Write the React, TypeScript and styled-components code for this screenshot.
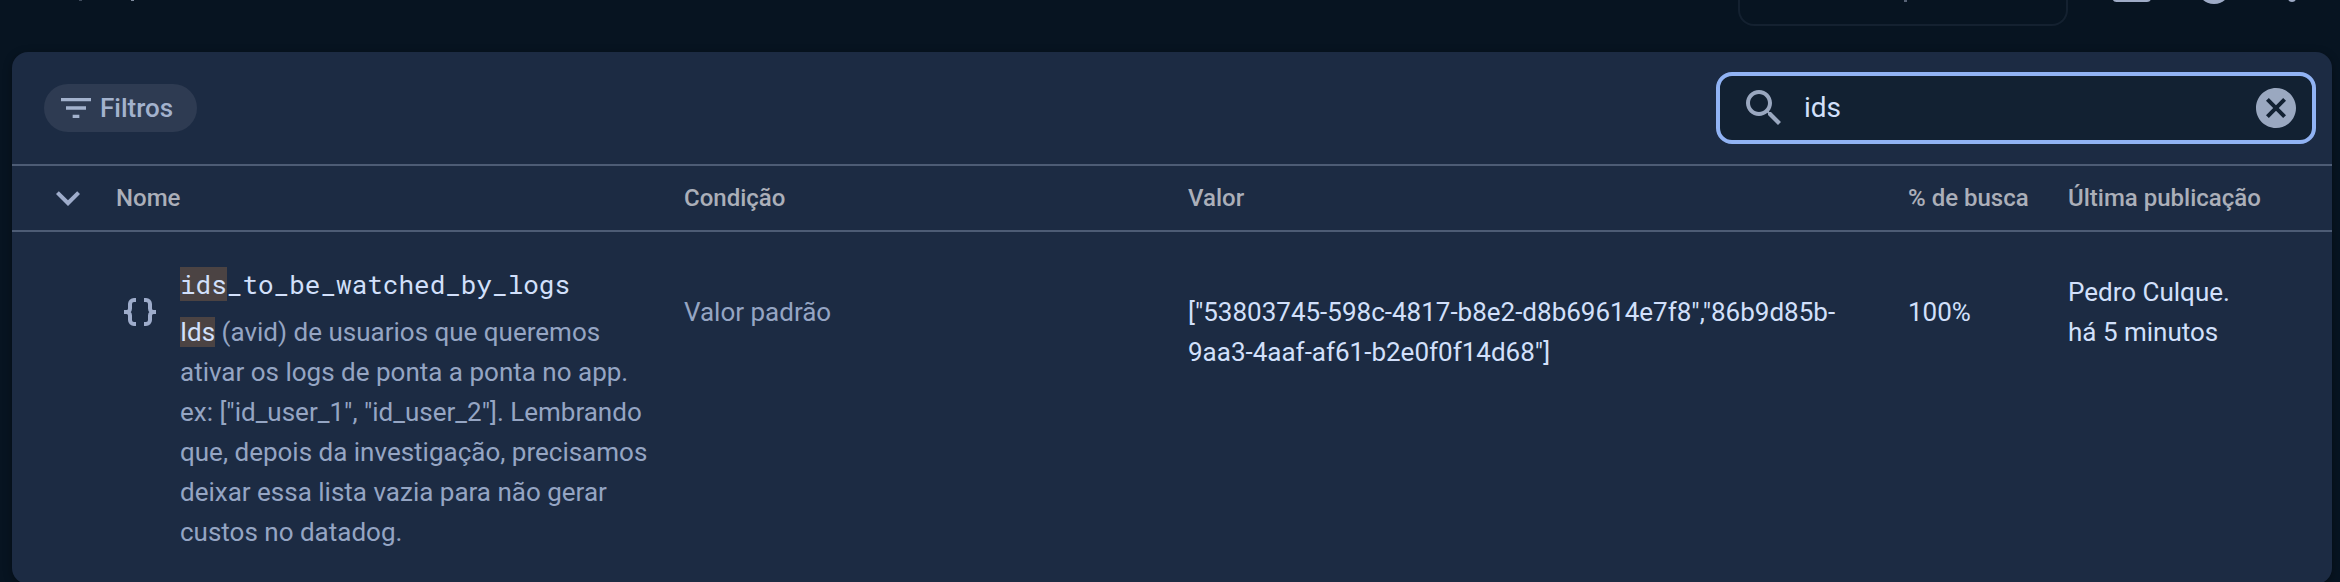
import React from "react";
import styled, { createGlobalStyle } from "styled-components";

const GlobalStyle = createGlobalStyle`
  * { box-sizing: border-box; }
  body { margin: 0; background: #071421; font-family: Roboto, "Liberation Sans", sans-serif; }
`;

const Page = styled.div`
  height: 582px;
  padding: 0 8px 0 12px;
  overflow: hidden;
  background: #071421;
`;

const TopBar = styled.header`
  height: 52px;
  display: flex;
  align-items: flex-start;
  padding-right: 28px;
`;

const TitleTail = styled.svg`
  display: block;
  width: 140px;
  height: 2px;
  margin-right: auto;
`;

const Selector = styled.div`
  width: 330px;
  height: 26px;
  margin-right: 44px;
  padding-left: 164px;
  border: 2px solid #142130;
  border-top: 0;
  border-radius: 0 0 16px 16px;
`;

const SelectorTail = styled.div`
  width: 3px;
  height: 2px;
  background: #566275;
`;

const TopIcons = styled.svg`
  display: block;
  width: 192px;
  height: 6px;
`;

const Card = styled.main`
  height: 532px;
  border-radius: 16px;
  background: #1c2b43;
  box-shadow: 0 2px 8px rgba(0, 0, 0, 0.35);
`;

const Toolbar = styled.div`
  height: 114px;
  padding: 0 16px 0 32px;
  border-bottom: 2px solid #4d5c75;
  display: flex;
  align-items: center;
  justify-content: space-between;
`;

const FilterChip = styled.button`
  height: 48px;
  width: 153px;
  padding: 0 0 0 12px;
  border: 0;
  border-radius: 24px;
  background: #2e3b52;
  color: #a3b2cd;
  display: flex;
  align-items: center;
  gap: 4px;
  font: 500 26px/40px Roboto, sans-serif;
`;

const SearchField = styled.div`
  width: 600px;
  height: 72px;
  padding: 0 12px 0 20px;
  border: 4px solid #91b3f4;
  border-radius: 16px;
  background: #122132;
  color: #9aa8c0;
  display: flex;
  align-items: center;
`;

const SearchInput = styled.input`
  flex: 1;
  min-width: 0;
  margin: 0 0 0 16px;
  padding: 0;
  border: 0;
  outline: 0;
  background: transparent;
  color: #d2e0fb;
  font: 400 28px/40px Roboto, sans-serif;
`;

const Icon = styled.svg<{ $size: number }>`
  display: block;
  flex: none;
  width: ${(p) => p.$size}px;
  height: ${(p) => p.$size}px;
  fill: currentColor;
`;

const BracesIcon = styled.svg`
  display: block;
  width: 32px;
  height: 28px;
  fill: none;
  stroke: currentColor;
  stroke-width: 4;
`;

const columns = "104px 568px 504px 720px 160px 1fr";

const HeadRow = styled.div`
  height: 66px;
  display: grid;
  grid-template-columns: ${columns};
  align-items: center;
  border-bottom: 2px solid #4d5c75;
  color: #abafb9;
  font-size: 24px;
  font-weight: 500;
  line-height: 32px;
`;

const Toggle = styled.div`
  padding-left: 32px;
  color: #9eaccb;
`;

const Row = styled.div`
  display: grid;
  grid-template-columns: 168px 504px 504px 720px 160px 1fr;
  align-items: start;
  color: #d2e0fb;
  font-size: 26px;
  line-height: 40px;
`;

const TypeIcon = styled.div`
  padding: 66px 0 0 112px;
  color: #9eaccb;
`;

const NameCell = styled.div`
  padding: 32px 24px 0 0;
`;

const Name = styled.div`
  height: 48px;
  font: 400 26px/40px "Roboto Mono", "DejaVu Sans Mono", monospace;
`;

const Description = styled.div`
  color: #95a5c3;
  white-space: nowrap;
`;

const Mark = styled.mark`
  background: #4b4343;
  color: #d2e0fb;
`;

const Cell = styled.div<{ $top: number; $muted?: boolean }>`
  padding-top: ${(p) => p.$top}px;
  color: ${(p) => (p.$muted ? "#95a5c3" : "#d2e0fb")};
  white-space: nowrap;
`;

export default function App() {
  return (
    <Page>
      <GlobalStyle />
      <TopBar>
        <TitleTail viewBox="0 0 140 2">
          <path d="M67 0h3v1h-3z" fill="#3f4b5c" />
          <path d="M119 0h3v1h-3z" fill="#808c9f" />
        </TitleTail>
        <Selector>
          <SelectorTail />
        </Selector>
        <TopIcons viewBox="0 0 192 6" fill="#9eabc6">
          <rect x="0.5" y="-10" width="38.5" height="12" rx="4" />
          <circle cx="102" cy="-13" r="17" />
          <circle cx="180" cy="-2" r="4" />
        </TopIcons>
      </TopBar>
      <Card>
        <Toolbar>
          <FilterChip>
            <Icon $size={40} viewBox="0 0 24 24">
              <path d="M10 18h4v-2h-4v2zM3 6v2h18V6H3zm3 7h12v-2H6v2z" />
            </Icon>
            Filtros
          </FilterChip>
          <SearchField>
            <Icon $size={48} viewBox="0 0 24 24">
              <path d="M15.5 14h-.79l-.28-.27C15.41 12.59 16 11.11 16 9.5 16 5.91 13.09 3 9.5 3S3 5.91 3 9.5 5.91 16 9.5 16c1.61 0 3.09-.59 4.23-1.57l.27.28v.79l5 4.99L20.49 19l-4.99-5zm-6 0C7.01 14 5 11.99 5 9.5S7.01 5 9.5 5 14 7.01 14 9.5 11.99 14 9.5 14z" />
            </Icon>
            <SearchInput defaultValue="ids" />
            <Icon $size={48} viewBox="0 0 24 24">
              <path d="M12 2C6.47 2 2 6.47 2 12s4.47 10 10 10 10-4.47 10-10S17.53 2 12 2zm5 13.59L15.59 17 12 13.41 8.41 17 7 15.59 10.59 12 7 8.41 8.41 7 12 10.59 15.59 7 17 8.41 13.41 12 17 15.59z" />
            </Icon>
          </SearchField>
        </Toolbar>
        <HeadRow>
          <Toggle>
            <Icon $size={48} viewBox="0 0 24 24">
              <path d="M16.59 8.59L12 13.17 7.41 8.59 6 10l6 6 6-6z" />
            </Icon>
          </Toggle>
          <div>Nome</div>
          <div>Condição</div>
          <div>Valor</div>
          <div>% de busca</div>
          <div>Última publicação</div>
        </HeadRow>
        <Row>
          <TypeIcon>
            <BracesIcon viewBox="0 0 32 28">
              <path d="M12 2h-2a4 4 0 0 0-4 4v4.5A3.5 3.5 0 0 1 2.500 14H0h2.500A3.500 3.500 0 0 1 6 17.500V22a4 4 0 0 0 4 4h2" />
              <path d="M20 2h2a4 4 0 0 1 4 4v4.5a3.500 3.500 0 0 0 3.500 3.500H32h-2.500a3.500 3.500 0 0 0-3.500 3.500V22a4 4 0 0 1-4 4h-2" />
            </BracesIcon>
          </TypeIcon>
          <NameCell>
            <Name>
              <Mark>ids</Mark>_to_be_watched_by_logs
            </Name>
            <Description>
              <Mark>Ids</Mark> (avid) de usuarios que queremos
              <br />
              ativar os logs de ponta a ponta no app.
              <br />
              ex: ["id_user_1", "id_user_2"]. Lembrando
              <br />
              que, depois da investigação, precisamos
              <br />
              deixar essa lista vazia para não gerar
              <br />
              custos no datadog.
            </Description>
          </NameCell>
          <Cell $top={60} $muted>
            Valor padrão
          </Cell>
          <Cell $top={60}>
            ["53803745-598c-4817-b8e2-d8b69614e7f8","86b9d85b-
            <br />
            9aa3-4aaf-af61-b2e0f0f14d68"]
          </Cell>
          <Cell $top={60}>100%</Cell>
          <Cell $top={40}>
            Pedro Culque.
            <br />
            há 5 minutos
          </Cell>
        </Row>
      </Card>
    </Page>
  );
}
